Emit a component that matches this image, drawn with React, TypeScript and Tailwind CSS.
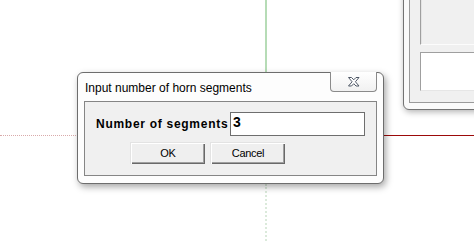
import React from "react";

const sans = { fontFamily: '"Liberation Sans", Arial, sans-serif' };

function CloseGlyph() {
  return (
    <svg width="12" height="10" viewBox="0 0 12 10">
      <polygon
        points="0.5,0.5 3.5,0.5 5.75,2.8 8,0.5 11,0.5 7.4,4.75 11,9 8,9 5.75,6.7 3.5,9 0.5,9 4.1,4.75"
        fill="#ffffff"
        stroke="#4f5866"
        strokeWidth="1"
        strokeLinejoin="round"
      />
    </svg>
  );
}

function Btn({ label }: { label: string }) {
  return (
    <button
      className="w-[75px] h-[22px] bg-[#efefef] text-[11px] tracking-[-0.3px] text-black flex items-center justify-center border-t border-l border-[#e3e3e3] shadow-[inset_1px_1px_0_#ffffff,inset_-1px_-1px_0_#696969,inset_-2px_-2px_0_#a0a0a0]"
      style={sans}
    >
      {label}
    </button>
  );
}

export default function App() {
  return (
    <div className="relative w-[474px] h-[242px] bg-white overflow-hidden" style={sans}>
      {/* guide lines on the canvas */}
      <div className="absolute left-[265px] top-0 w-[2px] h-[72px] bg-[#b6dcb6]" />
      <div className="absolute left-[265px] top-[184px] h-[60px] border-l-2 border-dotted border-[#dbeadb]" />
      <div className="absolute left-0 top-[135px] w-[78px] border-t border-dotted border-[#d9aaaa]" />
      <div className="absolute left-[383px] top-[135px] w-[92px] h-[1px] bg-[#9c0a0a]" />

      {/* window partly visible at the right */}
      <div className="absolute left-[403px] top-[-12px] w-[90px] h-[122px] bg-[#fafafa] border border-[#737373] rounded-bl-[6px] shadow-[1px_2px_6px_rgba(0,0,0,0.3)] pl-[5px] pb-[6px] flex">
        <div className="flex-1 bg-[#f0f0f0] border border-[#9a9a9a] pl-[10px] pb-[11px] flex flex-col gap-[7px]">
          <div className="flex-1 bg-[#f0f0f0] border-l border-t border-[#9f9f9f] border-b border-b-[#fcfcfc] shadow-[inset_1px_0_0_#e3e3e3]" />
          <div className="h-[39px] bg-white border-l border-t border-[#9f9f9f] border-b border-b-[#e6e6e6]" />
        </div>
      </div>

      {/* dialog */}
      <div className="absolute left-[77px] top-[72px] w-[307px] h-[112px] bg-[#fdfdfd] border border-[#6d6d6d] rounded-[6px] shadow-[2px_3px_7px_rgba(0,0,0,0.35)] flex flex-col px-[6px] pb-[7px]">
        <div className="h-[28px] flex items-start relative">
          <span className="text-[12px] text-black leading-[14px] mt-[8px] ml-[1px]">
            Input number of horn segments
          </span>
          <div className="absolute right-0 top-[-1px] w-[47px] h-[20px] border border-t-0 border-[#8a8a8a] rounded-b-[4px] bg-gradient-to-b from-[#ffffff] to-[#f1f1f1] flex items-center justify-center">
            <CloseGlyph />
          </div>
        </div>
        <div className="flex-1 bg-[#f0f0f0] border border-[#858585] flex flex-col pt-[10px]">
          <div className="flex items-center pl-[11px]">
            <span className="text-[12px] font-bold tracking-[0.72px] text-black leading-[14px] whitespace-nowrap">
              Number of segments
            </span>
            <div className="ml-auto mr-[11px] w-[135px] h-[24px] bg-white border border-[#6e6e6e] pl-[2px] pt-[1px] text-[14px] font-semibold leading-[16px] text-black">
              3
            </div>
          </div>
          <div className="flex gap-[5px] pl-[45px] mt-[6px]">
            <Btn label="OK" />
            <Btn label="Cancel" />
          </div>
        </div>
      </div>
    </div>
  );
}
